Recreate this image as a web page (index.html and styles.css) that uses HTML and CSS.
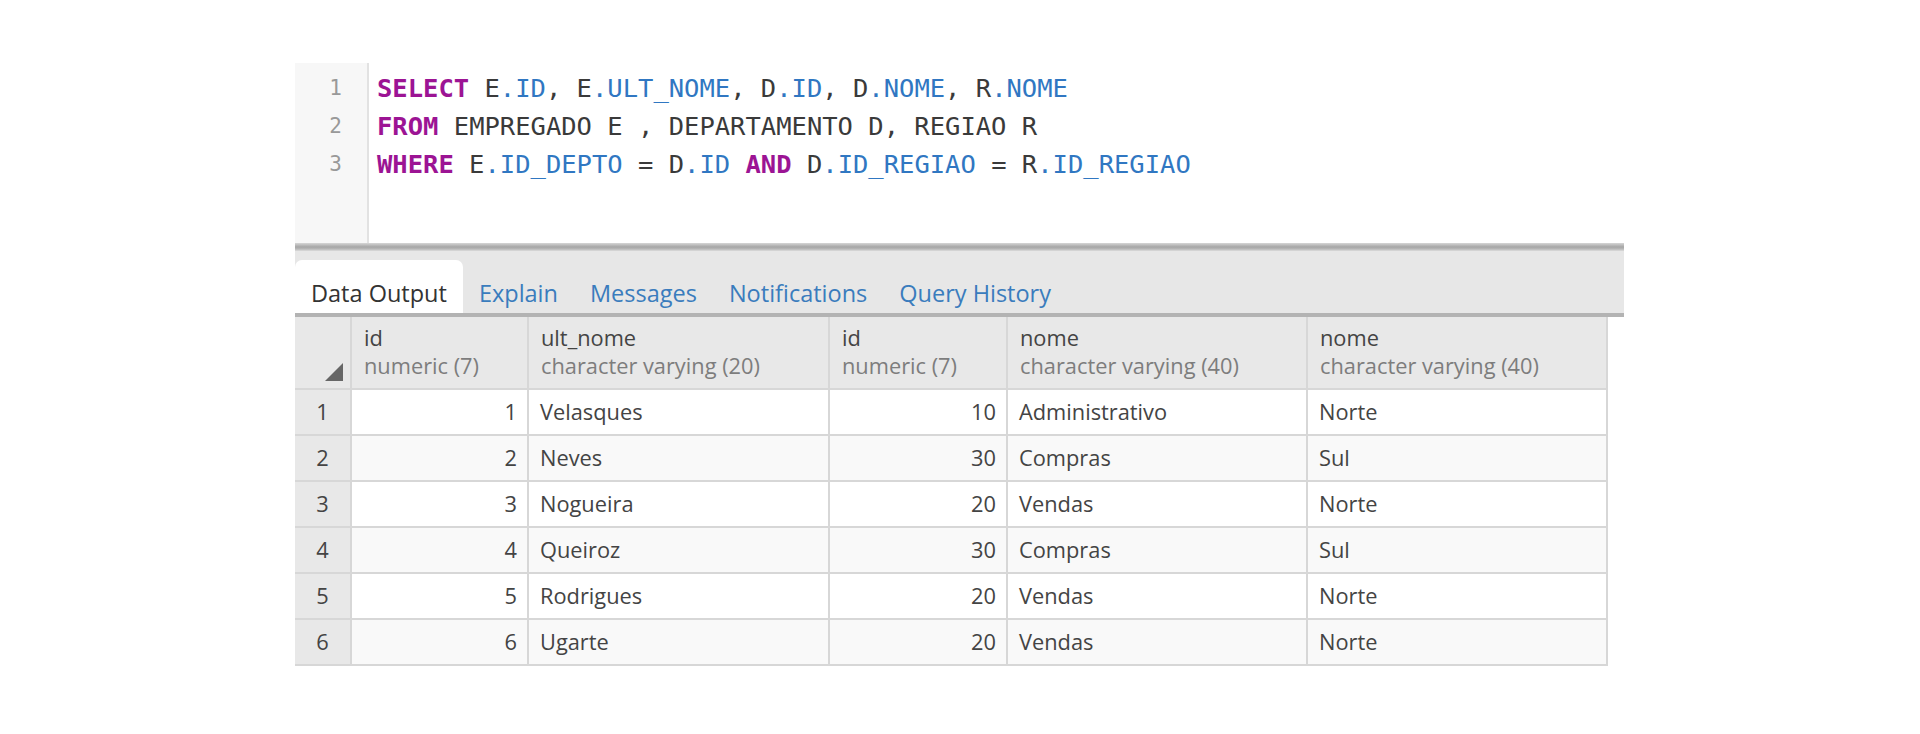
FILE: index.html
```html
<!DOCTYPE html>
<html lang="pt">
<head>
<meta charset="utf-8">
<title>Query</title>
<link rel="stylesheet" href="styles.css">
</head>
<body>
<div class="app">
  <div class="editor">
    <div class="gutter">
      <div class="ln">1</div>
      <div class="ln">2</div>
      <div class="ln">3</div>
    </div>
    <div class="code">
      <div class="line"><span class="kw">SELECT</span> E<span class="fd">.ID</span>, E<span class="fd">.ULT_NOME</span>, D<span class="fd">.ID</span>, D<span class="fd">.NOME</span>, R<span class="fd">.NOME</span></div>
      <div class="line"><span class="kw">FROM</span> EMPREGADO E , DEPARTAMENTO D, REGIAO R</div>
      <div class="line"><span class="kw">WHERE</span> E<span class="fd">.ID_DEPTO</span> = D<span class="fd">.ID</span> <span class="kw">AND</span> D<span class="fd">.ID_REGIAO</span> = R<span class="fd">.ID_REGIAO</span></div>
    </div>
  </div>
  <div class="splitter"></div>
  <div class="tabs">
    <div class="tab active">Data Output</div>
    <div class="tab">Explain</div>
    <div class="tab">Messages</div>
    <div class="tab">Notifications</div>
    <div class="tab">Query History</div>
  </div>
  <div class="grid">
    <div class="hcell corner"><svg class="sort" width="18" height="18" viewBox="0 0 18 18"><polygon points="18,0 18,18 0,18"/></svg></div>
    <div class="hcell"><div class="hname">id</div><div class="htype">numeric (7)</div></div>
    <div class="hcell"><div class="hname">ult_nome</div><div class="htype">character varying (20)</div></div>
    <div class="hcell"><div class="hname">id</div><div class="htype">numeric (7)</div></div>
    <div class="hcell"><div class="hname">nome</div><div class="htype">character varying (40)</div></div>
    <div class="hcell"><div class="hname">nome</div><div class="htype">character varying (40)</div></div>

    <div class="rn">1</div><div class="c num">1</div><div class="c">Velasques</div><div class="c num">10</div><div class="c">Administrativo</div><div class="c">Norte</div>
    <div class="rn">2</div><div class="c num alt">2</div><div class="c alt">Neves</div><div class="c num alt">30</div><div class="c alt">Compras</div><div class="c alt">Sul</div>
    <div class="rn">3</div><div class="c num">3</div><div class="c">Nogueira</div><div class="c num">20</div><div class="c">Vendas</div><div class="c">Norte</div>
    <div class="rn">4</div><div class="c num alt">4</div><div class="c alt">Queiroz</div><div class="c num alt">30</div><div class="c alt">Compras</div><div class="c alt">Sul</div>
    <div class="rn">5</div><div class="c num">5</div><div class="c">Rodrigues</div><div class="c num">20</div><div class="c">Vendas</div><div class="c">Norte</div>
    <div class="rn">6</div><div class="c num alt">6</div><div class="c alt">Ugarte</div><div class="c num alt">20</div><div class="c alt">Vendas</div><div class="c alt">Norte</div>
  </div>
</div>
</body>
</html>
```
FILE: styles.css
```css
html, body {
  margin: 0;
  padding: 0;
  background: #ffffff;
}
body {
  font-family: "Open Sans", "Noto Sans", sans-serif;
  color: #333333;
}
.app {
  margin-left: 295px;
  padding-top: 63px;
  width: 1329px;
}
.editor {
  display: flex;
  height: 180px;
  background: #ffffff;
}
.gutter {
  width: 72px;
  flex: none;
  background: #f7f7f7;
  border-right: 2px solid #e2e2e2;
  padding-top: 6px;
  box-sizing: content-box;
}
.ln {
  font-family: "DejaVu Sans Mono", monospace;
  font-size: 21px;
  line-height: 38px;
  height: 38px;
  text-align: right;
  padding-right: 25px;
  color: #999999;
}
.code {
  padding-top: 6px;
  padding-left: 8px;
  font-family: "DejaVu Sans Mono", monospace;
  font-size: 25.5px;
  line-height: 38px;
  color: #3a3a3a;
}
.line {
  height: 38px;
  white-space: pre;
}
.kw {
  color: #9c1494;
  font-weight: bold;
}
.fd {
  color: #3077c2;
}
.splitter {
  height: 8px;
  background: linear-gradient(#d6d6d6 0, #bdbdbd 25%, #a6a6a6 50%, #b8b8b8 75%, #dcdcdc 100%);
}
.tabs {
  display: flex;
  align-items: flex-end;
  height: 62px;
  background: #e7e7e7;
  border-bottom: 4px solid #b3b3b3;
}
.tab {
  height: 53px;
  box-sizing: border-box;
  padding: 17px 16px 0;
  font-size: 23.5px;
  line-height: 32px;
  color: #3a7cbd;
  white-space: nowrap;
}
.tab.active {
  background: #ffffff;
  color: #333333;
  border-radius: 7px 7px 0 0;
}
.grid {
  display: grid;
  grid-template-columns: 55px 175px 299px 176px 298px 298px;
  grid-auto-rows: 44px;
  grid-template-rows: 71px;
  gap: 2px;
  padding: 0 2px 2px 0;
  width: max-content;
  background: #d7d7d7;
  font-size: 21.8px;
}
.hcell {
  background: #e8e8e8;
  padding: 7px 12px 0;
  line-height: 28px;
  white-space: nowrap;
}
.hname {
  color: #444444;
}
.htype {
  color: #7d7d7d;
}
.corner {
  display: flex;
  align-items: flex-end;
  justify-content: flex-end;
  padding: 0 7px 7px 0;
}
.sort {
  fill: #666666;
  display: block;
}
.rn {
  background: #e8e8e8;
  text-align: center;
  line-height: 44px;
  color: #444444;
}
.c {
  background: #ffffff;
  line-height: 44px;
  padding: 0 10px 0 11px;
  white-space: nowrap;
  color: #444444;
}
.c.alt {
  background: #f9f9f9;
}
.c.num {
  text-align: right;
}
```
